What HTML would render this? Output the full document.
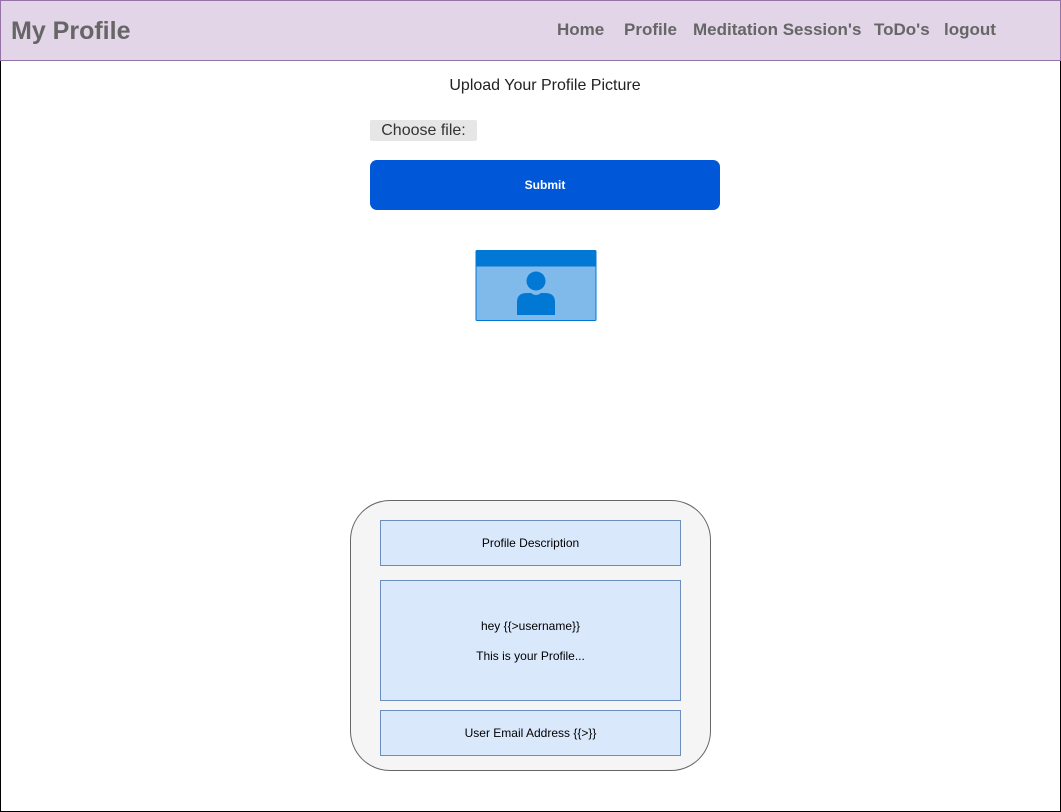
<html><head><style>
body{margin:0;width:1061px;height:812px;position:relative;font-family:"Liberation Sans",Arial,sans-serif;background:#fff;overflow:hidden}
.a{position:absolute}
.box{position:absolute;background:#dae8fc;border:1px solid #6c8ebf;box-sizing:border-box;font-size:12px;color:#000;display:flex;align-items:center;justify-content:center;text-align:center}
.nav{position:absolute;top:20px;font-size:17px;font-weight:bold;color:#666}
</style></head><body>
<div class="a" style="left:0;top:0;width:1061px;height:812px;border:1px solid #000;box-sizing:border-box"></div>
<div class="a" style="left:0;top:0;width:1061px;height:61px;background:#e1d5e7;border:1px solid #9673a6;box-sizing:border-box"></div>
<div class="a" style="left:11px;top:17px;font-size:25px;font-weight:bold;color:#666">My Profile</div>
<div class="nav" style="left:557px">Home</div>
<div class="nav" style="left:624px">Profile</div>
<div class="nav" style="left:693px">Meditation Session's</div>
<div class="nav" style="left:874px">ToDo's</div>
<div class="nav" style="left:944px">logout</div>
<div class="a" style="left:0;width:1090px;top:77px;text-align:center;font-size:16px;color:#222">Upload Your Profile Picture</div>
<div class="a" style="left:370px;top:120px;width:107px;height:21px;background:#e6e6e6;border-radius:2px;font-size:16px;color:#333;text-align:center;line-height:21px">Choose file:</div>
<div class="a" style="left:370px;top:160px;width:350px;height:50px;background:#0057d8;border-radius:7px;color:#fff;font-size:12px;font-weight:bold;text-align:center;line-height:50px">Submit</div>
<svg class="a" style="left:475px;top:250px" width="122" height="72">
<rect x="1" y="0.5" width="120" height="70" rx="1" fill="#7fbaea" stroke="#0078d4"/>
<rect x="1" y="0.5" width="120" height="16" fill="#0078d4"/>
<circle cx="61" cy="31" r="9.5" fill="#0078d4"/>
<path d="M42 65 L42 52 Q42 43 52 43 L56 43 Q61 47 66 43 L70 43 Q80 43 80 52 L80 65 Z" fill="#0078d4"/>
</svg>
<div class="a" style="left:350px;top:500px;width:361px;height:271px;background:#f5f5f5;border:1px solid #666;border-radius:40px;box-sizing:border-box"></div>
<div class="box" style="left:380px;top:520px;width:301px;height:46px">Profile Description</div>
<div class="box" style="left:380px;top:580px;width:301px;height:121px;line-height:30px">hey {{&gt;username}}<br>This is your Profile...</div>
<div class="box" style="left:380px;top:710px;width:301px;height:46px">User Email Address {{&gt;}}</div>
</body></html>
